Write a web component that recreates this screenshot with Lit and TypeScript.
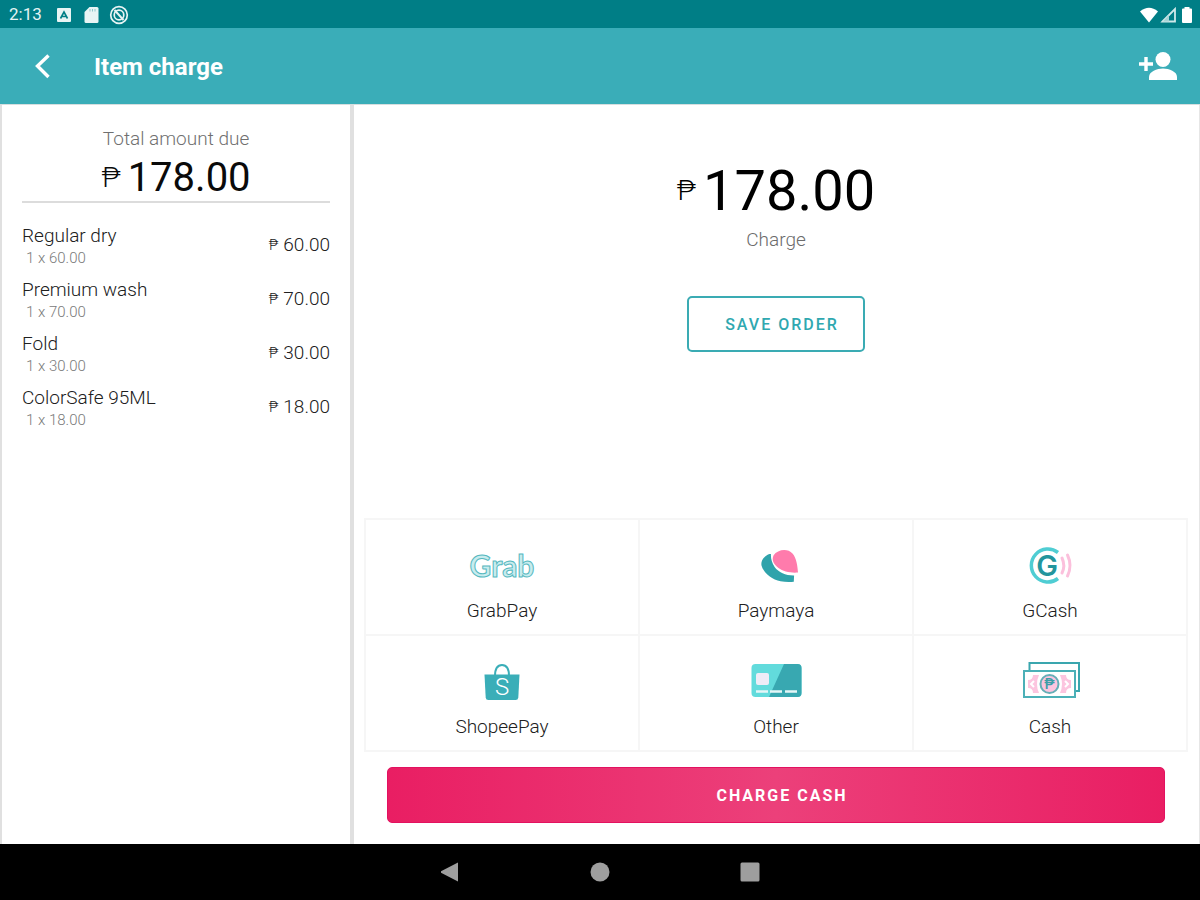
import { LitElement, html, css } from "lit";
import { customElement, property } from "lit/decorators.js";

interface LineItem {
  name: string;
  qty: number;
  price: string;
}

const items: LineItem[] = [
  { name: "Regular dry", qty: 1, price: "60.00" },
  { name: "Premium wash", qty: 1, price: "70.00" },
  { name: "Fold", qty: 1, price: "30.00" },
  { name: "ColorSafe 95ML", qty: 1, price: "18.00" },
];

const grab = html`<svg width="72" height="40" viewBox="0 0 72 40" aria-hidden="true">
  <text x="36" y="31" text-anchor="middle" font-family="Lato, sans-serif" font-size="30" font-weight="700"
    fill="#c8ecee" stroke="#55b8bf" stroke-width="1">Grab</text>
</svg>`;

const paymaya = html`<svg width="72" height="40" viewBox="0 0 72 40" aria-hidden="true">
  <path fill="#2fa3ab" d="M31 7.500C25 9 20.500 14 21.500 19.500c2 7.500 11 14.500 19 15.800 4.500.7 9 .7 13.300.4l.3-6.200c-8 .2-15.500-3-19.500-8.500-3-4.500-4-9-3.600-13.500z"/>
  <path fill="#ff7bac" d="M33.500 9.500c4-6 14-7.500 19-2C56.500 12 57.500 20 58 26.500c-7 .6-15-.8-19.500-4.500C33.500 18 31.500 14 33.500 9.500z"/>
</svg>`;

const gcash = html`<svg width="72" height="40" viewBox="0 0 72 40" aria-hidden="true">
  <path fill="none" stroke="#4fcdd3" stroke-width="3.500" d="M44 6.500A16.500 16.500 0 1 0 44 32.500"/>
  <text x="33" y="30" text-anchor="middle" font-family="Inter, sans-serif" font-size="29" font-weight="600" fill="#23959d">G</text>
  <path fill="none" stroke="#fbc0dc" stroke-width="3" stroke-linecap="round" d="M48 12q3.600 7.800 0 15M53.500 9q5 10.500 0 21"/>
</svg>`;

const shopee = html`<svg width="72" height="40" viewBox="0 0 72 40" aria-hidden="true">
  <path fill="none" stroke="#3aaeb8" stroke-width="2" d="M29 14c0-7 2.500-11 7-11s7 4 7 11"/>
  <path fill="#3aaeb8" d="M18.500 12.500h35l-1.200 23q-.2 2.500-2.700 2.500H22.400q-2.500 0-2.700-2.500z"/>
  <text x="36" y="33" text-anchor="middle" font-family="Roboto, sans-serif" font-size="24" fill="#ffffff">S</text>
</svg>`;

const card = html`<svg width="72" height="40" viewBox="0 0 72 40" aria-hidden="true">
  <rect x="11.500" y="2" width="50" height="33" rx="4" fill="#62dbdc"/>
  <path fill="#38a8b1" d="M44 2h13.500q4 0 4 4v25q0 4-4 4H29z"/>
  <rect x="16" y="11" width="13" height="12" rx="2" fill="#eeecf7"/>
  <path stroke="#e4f6f7" stroke-width="2.500" d="M16 29.500h12M30 29.500h12M45 29.500h12"/>
</svg>`;

const cash = html`<svg width="72" height="40" viewBox="0 0 72 40" aria-hidden="true">
  <path fill="none" stroke="#3aa6ae" stroke-width="2" d="M15.500 9V1H65v28h-4"/>
  <rect x="10" y="9" width="51" height="26" fill="#ffffff" stroke="#4bb0b7" stroke-width="2"/>
  <path fill="#fcc5df" d="M14 18q5 0 5-5h6q-4 9 0 18h-6q0-5-5-5zM57 18q-5 0-5-5h-6q4 9 0 18h6q0-5 5-5z"/>
  <path fill="none" stroke="#ffffff" stroke-width="2" d="M20 19l-3 3 3 3M51 19l3 3-3 3"/>
  <circle cx="35.500" cy="22" r="9" fill="#fcc5df" stroke="#65aeb7" stroke-width="2"/>
  <text x="35.500" y="27" text-anchor="middle" font-family="Roboto, sans-serif" font-size="14" font-weight="500" fill="#3c9ea8">₱</text>
</svg>`;

const methods = [
  { name: "GrabPay", icon: grab },
  { name: "Paymaya", icon: paymaya },
  { name: "GCash", icon: gcash },
  { name: "ShopeePay", icon: shopee },
  { name: "Other", icon: card },
  { name: "Cash", icon: cash },
];

@customElement("status-bar")
export class StatusBar extends LitElement {
  static styles = css`
    :host {
      display: flex;
      align-items: center;
      justify-content: space-between;
      height: 28px;
      padding: 1px 6px 0 9px;
      box-sizing: border-box;
      background: #007e86;
      color: #e4f3f3;
      font-size: 17px;
      line-height: 27px;
    }
    .group { display: flex; align-items: center; gap: 9px; }
    .signals { display: flex; align-items: center; gap: 2px; }
    .time { margin-right: 4px; }
    svg { display: block; }
  `;
  render() {
    return html`
      <div class="group">
        <span class="time">2:13</span>
        <svg width="18" height="18" viewBox="0 0 18 18" aria-hidden="true">
          <rect x="2" y="2" width="14" height="14" rx="1" fill="#e8f4f4"/>
          <path fill="none" stroke="#007e86" stroke-width="1.600" d="M5.500 12.500L9 6l3.500 6.500M7 10.500h4"/>
        </svg>
        <svg width="18" height="18" viewBox="0 0 18 18" aria-hidden="true">
          <path fill="#e8f4f4" d="M7.500 1H15q1.500 0 1.500 1.500v13Q16.500 17 15 17H4q-1.500 0-1.500-1.500V6z"/>
          <path stroke="#8fc6c9" d="M8 3v2.500M10.500 3v2.500M13 3v2.500"/>
        </svg>
        <svg width="20" height="20" viewBox="0 0 20 20" aria-hidden="true">
          <circle cx="10" cy="10" r="8.300" fill="none" stroke="#e8f4f4" stroke-width="1.700"/>
          <circle cx="10" cy="10" r="4.800" fill="none" stroke="#e8f4f4" stroke-width="1.700"/>
          <path stroke="#e8f4f4" stroke-width="1.900" d="M5.500 5l9 10"/>
        </svg>
      </div>
      <div class="signals">
        <svg width="18" height="16" viewBox="0 0 18 16" aria-hidden="true">
          <path fill="#ffffff" d="M0 4.500Q9-3 18 4.500L9 15.500z"/>
        </svg>
        <svg width="18" height="16" viewBox="0 0 18 16" aria-hidden="true">
          <path fill="none" stroke="#cfe8e9" stroke-width="1.800" d="M2.500 14.500L15 2v12.500z"/>
          <path fill="#a5d2d5" d="M9 8v6.500H3z"/>
        </svg>
        <svg width="14" height="18" viewBox="0 0 14 18" aria-hidden="true">
          <path fill="#ffffff" d="M4.500 1h5v1.500H11q1 0 1 1V16q0 1-1 1H3q-1 0-1-1V3.500q0-1 1-1h1.500z"/>
        </svg>
      </div>`;
  }
}

@customElement("peso-amount")
export class PesoAmount extends LitElement {
  @property() value = "";
  @property({ reflect: true }) size = "small";
  static styles = css`
    :host { display: flex; align-items: center; justify-content: center; }
    :host([size="small"]) { gap: 5px; font-size: 19px; line-height: 24px; font-weight: 300; }
    :host([size="medium"]) { gap: 7px; font-size: 40px; line-height: 48px; }
    :host([size="large"]) { gap: 7px; font-size: 56px; line-height: 64px; }
    .sign { font-weight: 300; font-size: 28px; line-height: 32px; }
    :host([size="small"]) .sign { font-size: 14px; line-height: 20px; }
  `;
  render() {
    return html`<span class="sign">₱</span><span>${this.value}</span>`;
  }
}

@customElement("order-summary")
export class OrderSummary extends LitElement {
  static styles = css`
    :host {
      display: block;
      box-sizing: border-box;
      padding: 22px 20px 0;
      border-left: 2px solid #e0e0e0;
      border-right: 4px solid #e0e0e0;
    }
    .due {
      border-bottom: 2px solid #dcdcdc;
      text-align: center;
    }
    .label { margin: 0; color: #707070; font-size: 19px; line-height: 24px; font-weight: 300; }
    .due peso-amount { color: #0a0a0a; padding-top: 3px; margin-bottom: -1px; height: 48px; }
    .lines { margin: 0; padding: 15px 0 0; list-style: none; }
    .line {
      display: flex;
      align-items: center;
      justify-content: space-between;
      height: 54px;
    }
    .name { color: #202020; font-size: 19px; line-height: 26px; font-weight: 300; }
    .detail { padding-left: 4px; color: #7a7a7a; font-size: 15px; line-height: 18px; font-weight: 300; }
    .line peso-amount { color: #202020; }
  `;
  render() {
    return html`
      <div class="due">
        <p class="label">Total amount due</p>
        <peso-amount size="medium" value="178.00"></peso-amount>
      </div>
      <ul class="lines">
        ${items.map(
          (i) => html`<li class="line">
            <div>
              <div class="name">${i.name}</div>
              <div class="detail">${i.qty} x ${i.price}</div>
            </div>
            <peso-amount value=${i.price}></peso-amount>
          </li>`
        )}
      </ul>`;
  }
}

@customElement("charge-panel")
export class ChargePanel extends LitElement {
  static styles = css`
    :host {
      display: flex;
      flex-direction: column;
      box-sizing: border-box;
      padding: 54px 11px 21px 10px;
      border-right: 1px solid #e6e6e6;
    }
    .top { display: flex; flex-direction: column; align-items: center; flex: 1; }
    peso-amount { color: #000000; }
    .caption { margin: 5px 0 44px; color: #6c6c6c; font-size: 19px; line-height: 24px; font-weight: 300; }
    button { font-family: inherit; cursor: pointer; }
    .save {
      height: 56px;
      padding: 0 24px 0 36px;
      border: 2px solid #3aabb3;
      border-radius: 5px;
      background: #ffffff;
      color: #2fa8b0;
      font-size: 16px;
      font-weight: 500;
      letter-spacing: 2px;
    }
    .methods {
      display: grid;
      grid-template-columns: repeat(3, 1fr);
      border-top: 2px solid #f6f6f6;
      border-left: 2px solid #f6f6f6;
    }
    .method {
      display: flex;
      flex-direction: column;
      align-items: center;
      gap: 12px;
      padding: 26px 0 10px;
      border: 0;
      border-right: 2px solid #f6f6f6;
      border-bottom: 2px solid #f6f6f6;
      background: #ffffff;
      color: #202020;
      font-size: 19px;
      line-height: 26px;
      font-weight: 300;
    }
    .charge {
      height: 56px;
      margin: 15px 23px 0;
      padding: 0 0 0 12px;
      border: 1px solid #e31160;
      border-radius: 5px;
      background: linear-gradient(90deg, #e91e63, #ec407a 50%, #e91e63);
      color: #ffffff;
      font-size: 16px;
      font-weight: 700;
      letter-spacing: 2px;
    }
  `;
  render() {
    return html`
      <div class="top">
        <peso-amount size="large" value="178.00"></peso-amount>
        <p class="caption">Charge</p>
        <button class="save" type="button">SAVE ORDER</button>
      </div>
      <div class="methods">
        ${methods.map(
          (m) => html`<button class="method" type="button">${m.icon}<span>${m.name}</span></button>`
        )}
      </div>
      <button class="charge" type="button">CHARGE CASH</button>`;
  }
}

@customElement("app-root")
export class AppRoot extends LitElement {
  static styles = css`
    :host {
      display: flex;
      flex-direction: column;
      min-height: 100vh;
      background: #ffffff;
      font-family: Roboto, "Liberation Sans", sans-serif;
    }
    .bar {
      display: flex;
      align-items: center;
      height: 76px;
      padding: 2px 20px 0 26px;
      box-sizing: border-box;
      background: #3aadb8;
      color: #ffffff;
    }
    h1 { flex: 1; margin: 0 0 0 36px; font-size: 24px; line-height: 32px; font-weight: 700; }
    button { display: flex; padding: 0; border: 0; background: none; color: inherit; cursor: pointer; }
    .content { display: grid; grid-template-columns: minmax(260px, 59fr) 141fr; flex: 1; border-top: 1px solid #d6dedf; }
    .nav {
      display: flex;
      align-items: center;
      justify-content: center;
      gap: 130px;
      height: 56px;
      background: #000000;
      color: #9e9e9e;
    }
  `;
  render() {
    return html`
      <status-bar></status-bar>
      <header class="bar">
        <button type="button" aria-label="Back">
          <svg width="32" height="32" viewBox="0 0 32 32" aria-hidden="true">
            <path fill="none" stroke="#ffffff" stroke-width="3.400" d="M22.500 4.500L11.500 15 22.500 26"/>
          </svg>
        </button>
        <h1>Item charge</h1>
        <button type="button" aria-label="Add customer">
          <svg width="42" height="34" viewBox="0 0 42 34" aria-hidden="true">
            <circle cx="25" cy="9.500" r="7.500" fill="#ffffff"/>
            <path fill="#ffffff" d="M11 30v-3c0-5.500 8-8.500 14-8.500s14 3 14 8.500v3z"/>
            <path stroke="#ffffff" stroke-width="3.400" d="M8 7v14M1 14h14"/>
          </svg>
        </button>
      </header>
      <main class="content">
        <order-summary></order-summary>
        <charge-panel></charge-panel>
      </main>
      <nav class="nav">
        <button type="button" aria-label="Back">
          <svg width="20" height="20" viewBox="0 0 20 20" aria-hidden="true">
            <path fill="currentColor" d="M18 0.500v19L1 10.800v-1.600z"/>
          </svg>
        </button>
        <button type="button" aria-label="Home">
          <svg width="20" height="20" viewBox="0 0 20 20" aria-hidden="true">
            <circle cx="10" cy="10" r="9.500" fill="currentColor"/>
          </svg>
        </button>
        <button type="button" aria-label="Recent apps">
          <svg width="20" height="20" viewBox="0 0 20 20" aria-hidden="true">
            <rect x="0.500" y="0.500" width="19" height="19" rx="1.500" fill="currentColor"/>
          </svg>
        </button>
      </nav>`;
  }
}
